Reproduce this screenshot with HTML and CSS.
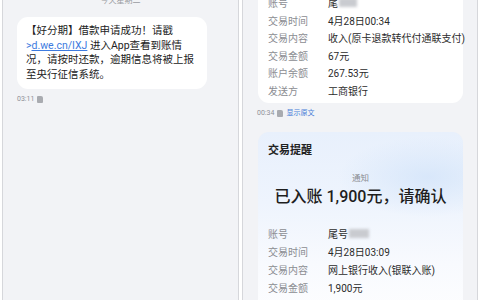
FILE: index.html
```html
<!DOCTYPE html>
<html lang="zh-CN">
<head>
    <meta charset="UTF-8">
    <title>短信</title>
    <link rel="stylesheet" href="styles.css">
</head>
<body>
    <div class="screens">
        <div class="phone">
            <div class="day">今天星期二</div>
            <div class="bubble">
                【好分期】借款申请成功！请戳<br>
                <a class="link">&gt;<u>d.we.cn/IXJ</u></a> 进入App查看到账情<br>
                况，请按时还款，逾期信息将被上报<br>
                至央行征信系统。
            </div>
            <div class="meta">03:11 <span class="sim"></span></div>
        </div>

        <div class="phone">
            <div class="card card-top">
                <div class="row"><span class="label">账号</span><span class="value">尾<span class="mask"></span></span></div>
                <div class="row"><span class="label">交易时间</span><span class="value">4月28日00:34</span></div>
                <div class="row"><span class="label">交易内容</span><span class="value">收入(原卡退款转代付通联支付)</span></div>
                <div class="row"><span class="label">交易金额</span><span class="value">67元</span></div>
                <div class="row"><span class="label">账户余额</span><span class="value">267.53元</span></div>
                <div class="row"><span class="label">发送方</span><span class="value">工商银行</span></div>
            </div>
            <div class="meta meta-right">00:34 <span class="sim"></span> <span class="orig">显示原文</span></div>

            <div class="card card-notice">
                <div class="card-title">交易提醒</div>
                <div class="notice-tag">通知</div>
                <div class="notice-main">已入账 1,900元，请确认</div>
                <div class="rows">
                    <div class="row"><span class="label">账号</span><span class="value">尾号<span class="mask wide"></span></span></div>
                    <div class="row"><span class="label">交易时间</span><span class="value">4月28日03:09</span></div>
                    <div class="row"><span class="label">交易内容</span><span class="value">网上银行收入(银联入账)</span></div>
                    <div class="row"><span class="label">交易金额</span><span class="value">1,900元</span></div>
                    <div class="row"><span class="label">账户余额</span><span class="value">2,167.53元</span></div>
                </div>
            </div>
        </div>
    </div>
</body>
</html>
```

FILE: styles.css
```css
* {
    margin: 0;
    padding: 0;
    box-sizing: border-box;
}

body {
    background: #ffffff;
    font-family: "Roboto", "Noto Sans CJK SC", sans-serif;
    width: 480px;
    height: 300px;
    overflow: hidden;
}

.screens {
    display: flex;
    gap: 3px;
    padding-left: 2px;
    height: 300px;
}

.phone {
    background: #f2f3f6;
    border-left: 1px solid #d6d7db;
    border-right: 1px solid #d6d7db;
    height: 300px;
    overflow: hidden;
    display: flex;
    flex-direction: column;
}

.phone:first-child {
    width: 237px;
}

.phone:last-child {
    width: 236px;
}

.day {
    text-align: center;
    font-size: 8px;
    line-height: 10px;
    color: #9a9ca2;
    margin-top: -4px;
}

.bubble {
    background: #ffffff;
    border-radius: 11px;
    margin: 11px 0 0 14px;
    width: 190px;
    padding: 7px 0 7px 9px;
    font-size: 10.5px;
    line-height: 14.5px;
    color: #222;
    white-space: nowrap;
}

.link {
    color: #3d7be0;
}

.link u {
    text-decoration-thickness: 0.5px;
    text-underline-offset: 1px;
}

.meta {
    display: flex;
    align-items: center;
    gap: 3px;
    font-size: 7px;
    line-height: 10px;
    color: #8f9196;
    margin: 5px 0 0 14px;
}

.sim {
    display: inline-block;
    width: 6px;
    height: 7px;
    background: #a9abb0;
    border-radius: 1px 2px 1px 1px;
}

.orig {
    color: #4a7fd8;
}

.card {
    background: #ffffff;
    border-radius: 11px;
    margin-left: 15px;
    width: 205px;
    padding: 0 6px 0 10px;
}

.card-top {
    margin-top: -12px;
    padding-top: 6px;
    padding-bottom: 4px;
}

.meta-right {
    margin: 5px 0 0 14px;
}

.row {
    display: flex;
    align-items: center;
    height: 17.5px;
    font-size: 10px;
    white-space: nowrap;
}

.label {
    width: 60px;
    flex-shrink: 0;
    color: #8b8d92;
}

.value {
    color: #2b2b2b;
    display: flex;
    align-items: center;
}

.mask {
    display: inline-block;
    width: 18px;
    height: 9px;
    background: #c9cbd0;
    filter: blur(1.5px);
    margin-left: 1px;
}

.mask.wide {
    width: 20px;
}

.card-notice {
    margin-top: 14px;
    padding-top: 12px;
    padding-bottom: 20px;
    background:
        radial-gradient(ellipse 90px 40px at 170px 45px, rgba(214, 230, 250, 0.9), rgba(214, 230, 250, 0) 100%),
        linear-gradient(180deg, #e8f0fc 0%, #eef4fd 35%, #f8fafe 65%, #ffffff 100%);
}

.card-title {
    font-size: 11px;
    line-height: 13px;
    font-weight: bold;
    color: #222;
}

.notice-tag {
    text-align: center;
    font-size: 8.5px;
    line-height: 10px;
    color: #8b8d92;
    margin-top: 16px;
    padding-right: 4px;
}

.notice-main {
    text-align: center;
    font-size: 16px;
    line-height: 20px;
    font-weight: 500;
    color: #1e1e1e;
    margin-top: 4px;
    padding-right: 4px;
    white-space: nowrap;
}

.rows {
    margin-top: 17px;
}

.rows .row {
    height: 18px;
}
```
